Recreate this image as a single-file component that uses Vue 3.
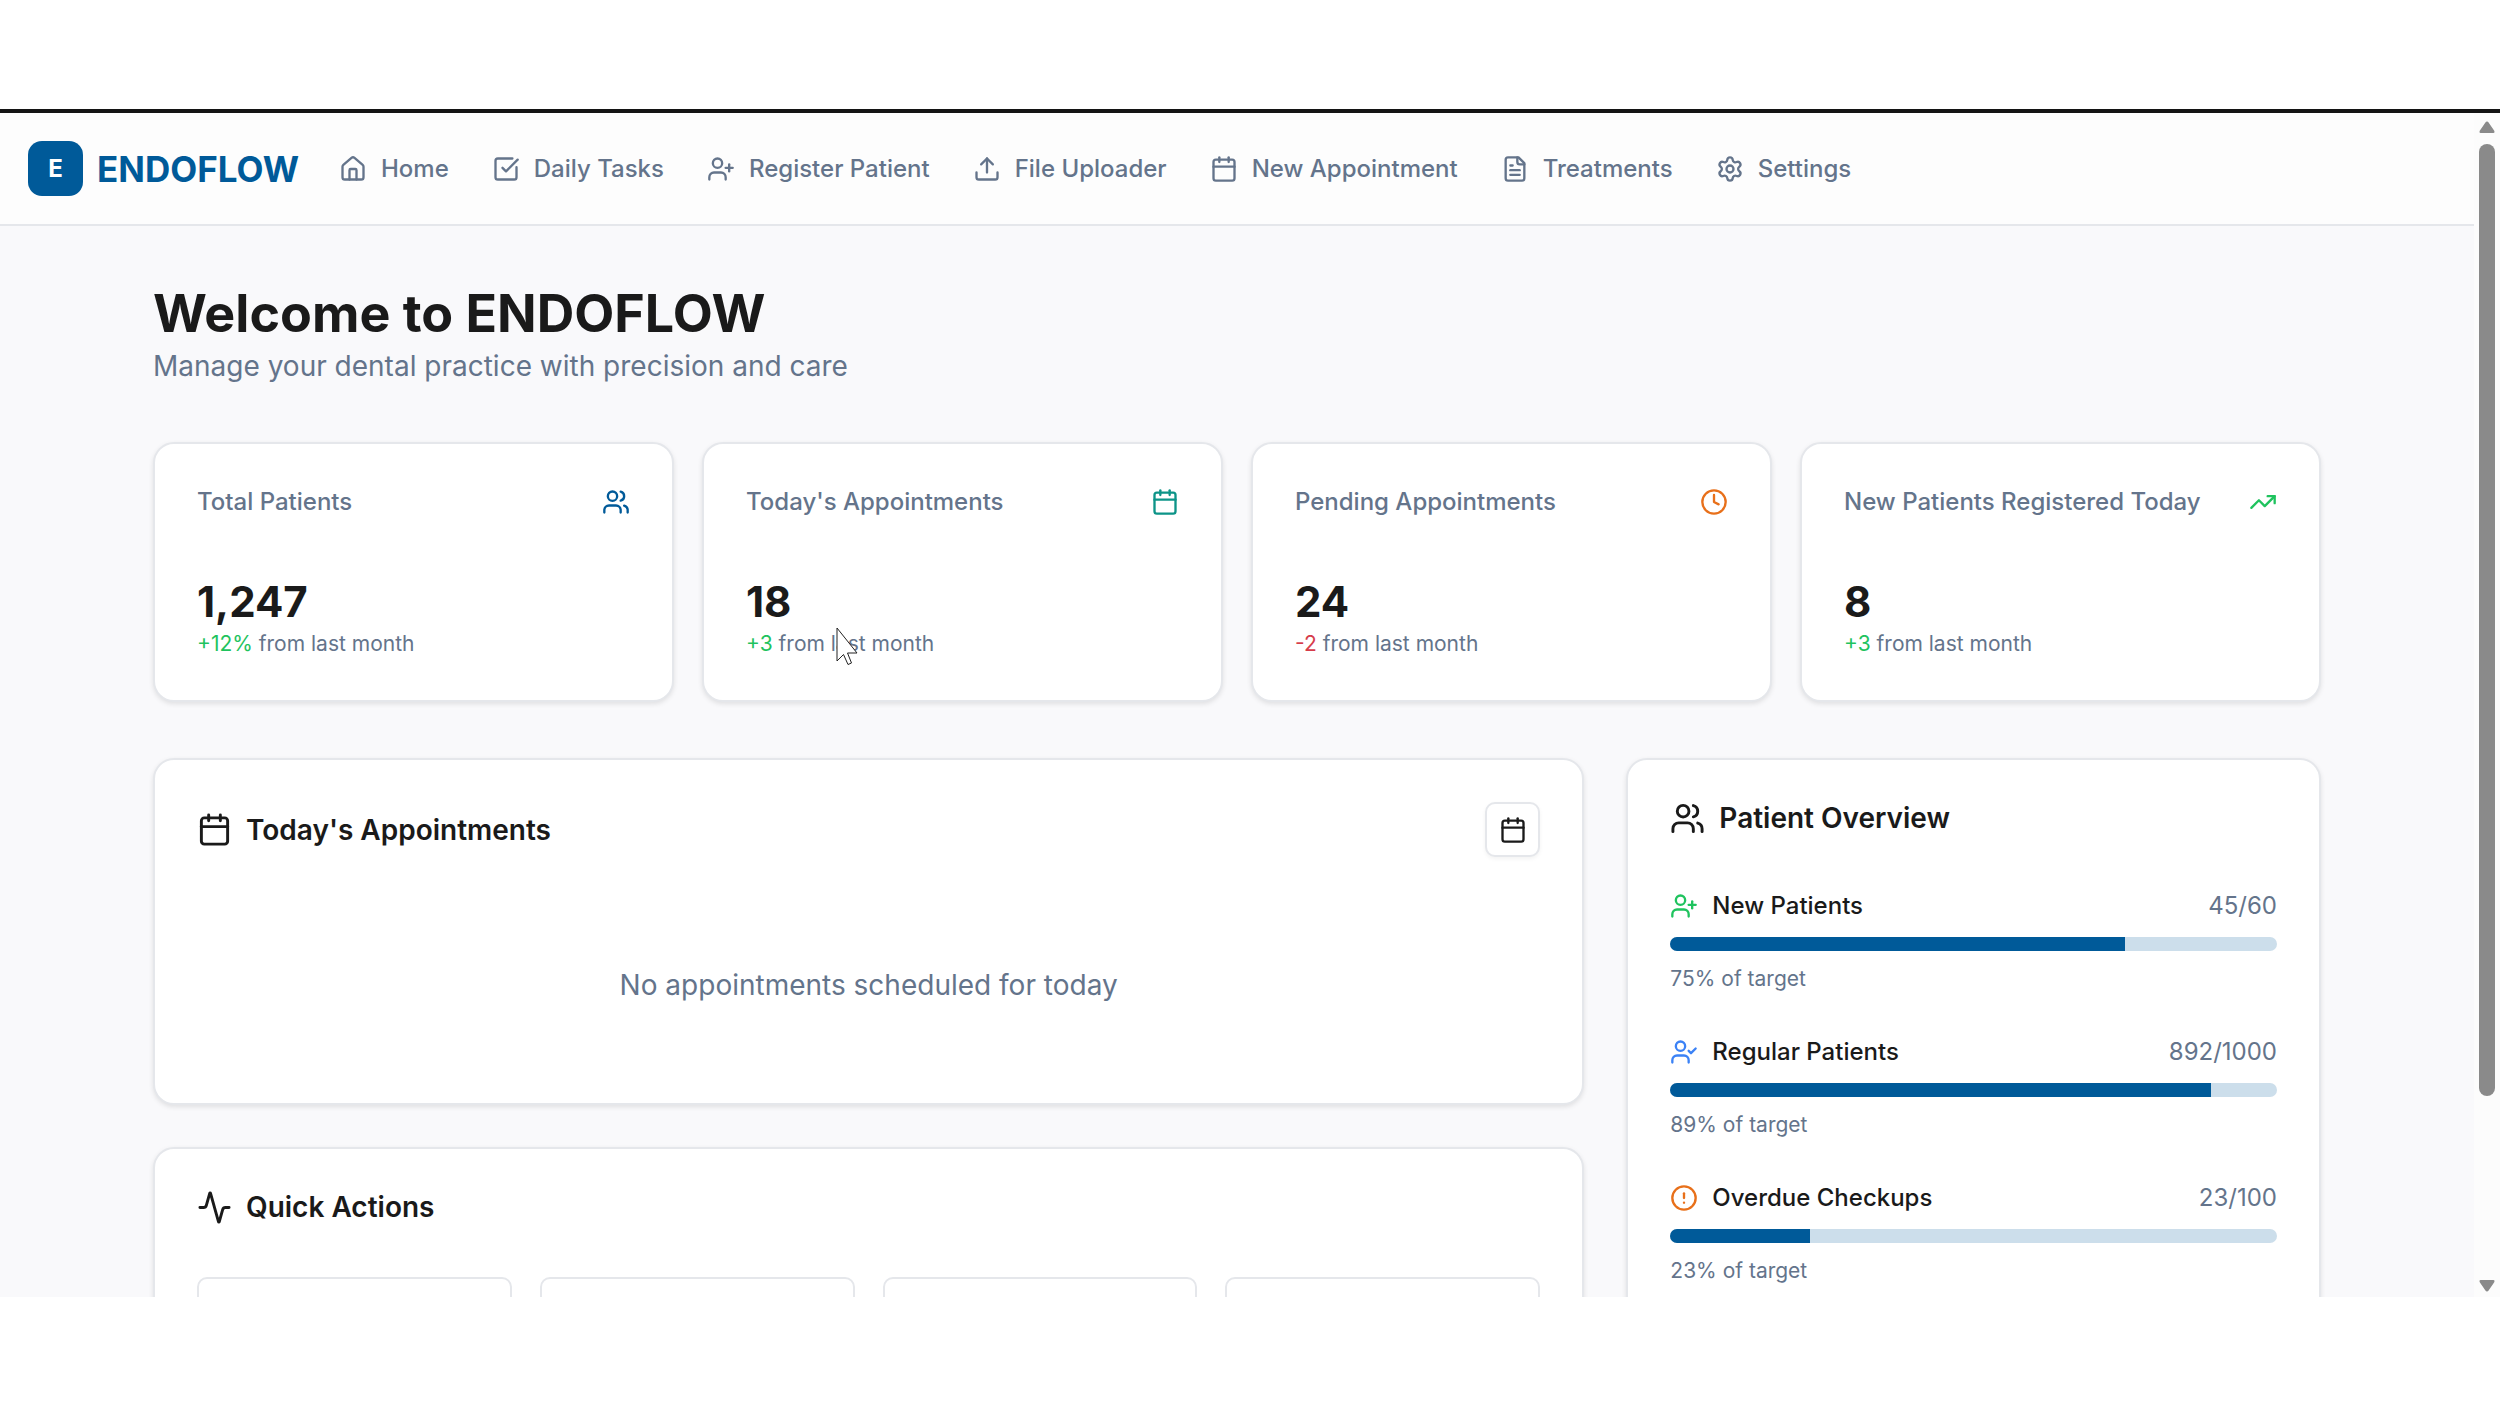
<script setup>
import { h } from 'vue'

const icons = {
  home: ['M15 21v-8a1 1 0 0 0-1-1h-4a1 1 0 0 0-1 1v8', 'M3 10a2 2 0 0 1 .709-1.528l7-5.999a2 2 0 0 1 2.582 0l7 5.999A2 2 0 0 1 21 10v9a2 2 0 0 1-2 2H5a2 2 0 0 1-2-2z'],
  tasks: ['M21 10.5V19a2 2 0 0 1-2 2H5a2 2 0 0 1-2-2V5a2 2 0 0 1 2-2h12.5', 'm9 11 3 3L22 4'],
  userPlus: ['M16 21v-2a4 4 0 0 0-4-4H6a4 4 0 0 0-4 4v2', 'M9 3a4 4 0 1 0 0 8a4 4 0 1 0 0-8', 'M19 8v6', 'M22 11h-6'],
  userCheck: ['M16 21v-2a4 4 0 0 0-4-4H6a4 4 0 0 0-4 4v2', 'M9 3a4 4 0 1 0 0 8a4 4 0 1 0 0-8', 'm16 11 2 2 4-4'],
  users: ['M16 21v-2a4 4 0 0 0-4-4H6a4 4 0 0 0-4 4v2', 'M9 3a4 4 0 1 0 0 8a4 4 0 1 0 0-8', 'M22 21v-2a4 4 0 0 0-3-3.87', 'M16 3.128a4 4 0 0 1 0 7.744'],
  upload: ['M12 3v12', 'm17 8-5-5-5 5', 'M21 15v4a2 2 0 0 1-2 2H5a2 2 0 0 1-2-2v-4'],
  calendar: ['M8 2v4', 'M16 2v4', 'M5 4h14a2 2 0 0 1 2 2v14a2 2 0 0 1-2 2H5a2 2 0 0 1-2-2V6a2 2 0 0 1 2-2z', 'M3 10h18'],
  file: ['M15 2H6a2 2 0 0 0-2 2v16a2 2 0 0 0 2 2h12a2 2 0 0 0 2-2V7z', 'M14 2v4a2 2 0 0 0 2 2h4', 'M10 9H8', 'M16 13H8', 'M16 17H8'],
  settings: ['M9.671 4.136a2.34 2.34 0 0 1 4.659 0 2.34 2.34 0 0 0 3.319 1.915 2.34 2.34 0 0 1 2.33 4.033 2.34 2.34 0 0 0 0 3.831 2.34 2.34 0 0 1-2.33 4.033 2.34 2.34 0 0 0-3.319 1.915 2.34 2.34 0 0 1-4.659 0 2.34 2.34 0 0 0-3.32-1.915 2.34 2.34 0 0 1-2.33-4.033 2.34 2.34 0 0 0 0-3.831A2.34 2.34 0 0 1 6.35 6.051a2.34 2.34 0 0 0 3.319-1.915', 'M12 9a3 3 0 1 0 0 6a3 3 0 1 0 0-6'],
  clock: ['M12 2a10 10 0 1 0 0 20a10 10 0 1 0 0-20', 'M12 6v6l4 2'],
  trend: ['M16 7h6v6', 'm22 7-8.5 8.5-5-5L2 17'],
  activity: ['M22 12h-2.48a2 2 0 0 0-1.93 1.46l-2.35 8.36a.25.25 0 0 1-.48 0L9.24 2.18a.25.25 0 0 0-.48 0l-2.35 8.36A2 2 0 0 1 4.49 12H2'],
  alert: ['M12 2a10 10 0 1 0 0 20a10 10 0 1 0 0-20', 'M12 8v4', 'M12 16h.01']
}

const Icon = (props) =>
  h(
    'svg',
    {
      viewBox: '0 0 24 24',
      fill: 'none',
      stroke: 'currentColor',
      'stroke-width': 2,
      'stroke-linecap': 'round',
      'stroke-linejoin': 'round',
      'aria-hidden': 'true'
    },
    icons[props.name].map((d) => h('path', { d }))
  )
Icon.props = ['name']

const nav = [
  { icon: 'home', label: 'Home' },
  { icon: 'tasks', label: 'Daily Tasks' },
  { icon: 'userPlus', label: 'Register Patient' },
  { icon: 'upload', label: 'File Uploader' },
  { icon: 'calendar', label: 'New Appointment' },
  { icon: 'file', label: 'Treatments' },
  { icon: 'settings', label: 'Settings' }
]

const stats = [
  { label: 'Total Patients', value: '1,247', change: '+12%', icon: 'users', tone: 'primary' },
  { label: "Today's Appointments", value: '18', change: '+3', icon: 'calendar', tone: 'teal' },
  { label: 'Pending Appointments', value: '24', change: '-2', icon: 'clock', tone: 'orange' },
  { label: 'New Patients Registered Today', value: '8', change: '+3', icon: 'trend', tone: 'green' }
]

const overview = [
  { label: 'New Patients', count: 45, target: 60, icon: 'userPlus', tone: 'green' },
  { label: 'Regular Patients', count: 892, target: 1000, icon: 'userCheck', tone: 'blue' },
  { label: 'Overdue Checkups', count: 23, target: 100, icon: 'alert', tone: 'orange' }
]
const percent = (row) => (row.count / row.target) * 100
</script>

<template>
  <div class="screen">
    <div class="window">
      <div class="view">
        <header class="topbar">
          <a class="brand" href="#">
            <span class="mark">E</span>
            <span class="name">ENDOFLOW</span>
          </a>
          <nav class="nav">
            <a v-for="item in nav" :key="item.label" class="nav-link" href="#">
              <Icon class="icon" :name="item.icon" />{{ item.label }}
            </a>
          </nav>
        </header>

        <main class="main">
          <h1>Welcome to ENDOFLOW</h1>
          <p class="lead">Manage your dental practice with precision and care</p>

          <section class="stats">
            <article v-for="s in stats" :key="s.label" class="card">
              <div class="stat-head">
                <h2>{{ s.label }}</h2>
                <Icon class="icon" :class="s.tone" :name="s.icon" />
              </div>
              <div class="value">{{ s.value }}</div>
              <p class="note">
                <span :class="s.change.startsWith('-') ? 'red' : 'green'">{{ s.change }}</span> from last month
              </p>
            </article>
          </section>

          <div class="columns">
            <div class="left">
              <section class="card">
                <div class="panel-head">
                  <h3 class="title"><Icon class="icon-lg" name="calendar" />Today's Appointments</h3>
                  <button class="square" type="button" aria-label="Open calendar"><Icon class="icon" name="calendar" /></button>
                </div>
                <p class="empty">No appointments scheduled for today</p>
              </section>
              <section class="card">
                <h3 class="title"><Icon class="icon-lg" name="activity" />Quick Actions</h3>
                <div class="actions">
                  <button v-for="n in 4" :key="n" class="action" type="button" :aria-label="'Quick action ' + n"></button>
                </div>
              </section>
            </div>

            <section class="card">
              <h3 class="title"><Icon class="icon-lg" name="users" />Patient Overview</h3>
              <ul class="rows">
                <li v-for="row in overview" :key="row.label">
                  <div class="row-head">
                    <span class="row-label"><Icon class="icon" :class="row.tone" :name="row.icon" />{{ row.label }}</span>
                    <span class="count">{{ row.count }}/{{ row.target }}</span>
                  </div>
                  <div class="track"><div class="fill" :style="{ width: percent(row) + '%' }"></div></div>
                  <p class="note">{{ Math.floor(percent(row)) }}% of target</p>
                </li>
              </ul>
            </section>
          </div>
        </main>
      </div>

      <div class="scrollbar" aria-hidden="true">
        <svg class="arrow" viewBox="0 0 16 12"><path d="M8 0.5 Q9 0.5 9.6 1.6 L15.4 10 Q16 12 14.5 12 H1.5 Q0 12 0.6 10 L6.4 1.6 Q7 0.5 8 0.5z" /></svg>
        <div class="groove"><div class="thumb"></div><div class="rest"></div></div>
        <svg class="arrow" viewBox="0 0 16 12"><path d="M8 11.5 Q9 11.5 9.6 10.4 L15.4 2 Q16 0 14.5 0 H1.5 Q0 0 0.6 2 L6.4 10.4 Q7 11.5 8 11.5z" /></svg>
      </div>

      <svg class="cursor" viewBox="0 0 22 38" aria-hidden="true">
        <path d="M1 1V34L7.500 27.500L12 37.500L15.500 36L11.500 26H21z" />
      </svg>
    </div>
  </div>
</template>

<style>
body {
  margin: 0;
  background: #fff;
}
</style>

<style scoped>
.screen {
  box-sizing: border-box;
  height: 100vh;
  padding: 109px 0;
  font-family: Inter, "Liberation Sans", sans-serif;
  color: #1a1a1a;
}
.screen * {
  box-sizing: border-box;
}
h1, h2, h3, p, ul {
  margin: 0;
  padding: 0;
}
a {
  color: inherit;
  text-decoration: none;
}
.window {
  position: relative;
  display: flex;
  height: 100%;
  overflow: hidden;
  border-top: 4px solid #141414;
  background: #fcfcfc;
}
.view {
  flex: 1;
  min-width: 0;
  overflow: hidden;
  background: #f9f9fb;
}
.topbar {
  display: flex;
  align-items: center;
  gap: 40px;
  height: 113px;
  padding: 0 28px;
  border-bottom: 2px solid #e5e7eb;
  background: #fdfdfd;
}
.brand {
  display: flex;
  align-items: center;
  gap: 14px;
  color: #005a99;
  font-weight: 700;
}
.mark {
  display: grid;
  place-items: center;
  width: 55px;
  height: 55px;
  border-radius: 14px;
  background: #005a99;
  color: #fff;
  font-size: 24px;
}
.name {
  font-size: 35px;
}
.nav {
  display: flex;
  gap: 43px;
}
.nav-link {
  display: flex;
  align-items: center;
  gap: 14px;
  color: #64748b;
  font-size: 24px;
  font-weight: 500;
  white-space: nowrap;
}
.icon {
  flex: none;
  width: 28px;
  height: 28px;
}
.icon-lg {
  flex: none;
  width: 35px;
  height: 35px;
}
.main {
  padding: 56px 153px;
}
h1 {
  font-size: 52px;
  line-height: 64px;
  font-weight: 700;
}
.lead {
  color: #64748b;
  font-size: 28px;
  line-height: 40px;
}
.stats {
  display: grid;
  grid-template-columns: repeat(4, 1fr);
  gap: 28px;
  margin: 56px 0;
}
.card {
  padding: 42px;
  border: 2px solid #e5e7eb;
  border-radius: 21px;
  background: #fff;
  box-shadow: 0 2px 5px rgba(0, 0, 0, 0.1);
}
.stat-head {
  display: flex;
  align-items: center;
  justify-content: space-between;
  height: 32px;
  margin-bottom: 55px;
}
h2 {
  color: #64748b;
  font-size: 24px;
  line-height: 32px;
  font-weight: 500;
}
.value {
  font-size: 42px;
  line-height: 57px;
  font-weight: 700;
}
.note {
  color: #64748b;
  font-size: 21px;
  line-height: 28px;
}
.primary { color: #005a99; }
.teal { color: #0d9488; }
.orange { color: #e8701a; }
.green { color: #1fc35e; }
.blue { color: #3b82f6; }
.red { color: #d63c4a; }
.columns {
  display: grid;
  grid-template-columns: repeat(3, 1fr);
  gap: 42px;
}
.left {
  display: grid;
  grid-column: span 2;
  gap: 42px;
}
.panel-head {
  display: flex;
  align-items: center;
  justify-content: space-between;
}
.title {
  display: flex;
  align-items: center;
  gap: 14px;
  height: 32px;
  font-size: 28px;
  line-height: 32px;
  font-weight: 600;
}
.square {
  display: grid;
  place-items: center;
  width: 55px;
  height: 55px;
  padding: 0;
  border: 2px solid #e5e7eb;
  border-radius: 10px;
  background: #fff;
  color: inherit;
  box-shadow: 0 2px 4px rgba(0, 0, 0, 0.05);
}
.empty {
  margin-top: 54px;
  padding: 53px 0 55px;
  color: #64748b;
  font-size: 28px;
  line-height: 42px;
  text-align: center;
}
.actions {
  display: grid;
  grid-template-columns: repeat(4, 1fr);
  gap: 28px;
  margin-top: 54px;
}
.action {
  height: 144px;
  border: 2px solid #e5e7eb;
  border-radius: 10px;
  background: #fff;
}
.rows {
  display: grid;
  gap: 41px;
  margin-top: 54px;
  list-style: none;
}
.row-head {
  display: flex;
  justify-content: space-between;
  font-size: 24px;
  line-height: 36px;
}
.row-label {
  display: flex;
  align-items: center;
  gap: 14px;
  font-weight: 500;
}
.count {
  color: #64748b;
}
.track {
  height: 14px;
  margin: 13px 0 14px;
  overflow: hidden;
  border-radius: 7px;
  background: #ccdeeb;
}
.fill {
  height: 100%;
  background: #005a99;
}
.scrollbar {
  display: flex;
  flex-direction: column;
  align-items: center;
  gap: 11px;
  width: 26px;
  padding: 8px 0 5px;
}
.arrow {
  width: 16px;
  height: 12px;
  fill: #8a8a8a;
}
.groove {
  display: flex;
  flex: 1;
  flex-direction: column;
  width: 16px;
}
.thumb {
  flex: 11;
  border-radius: 8px;
  background: #8a8a8a;
}
.rest {
  flex: 2;
}
.cursor {
  position: absolute;
  top: 514px;
  left: 836px;
  width: 22px;
  height: 38px;
  fill: #fff;
  stroke: #222;
  stroke-width: 1;
}
</style>
